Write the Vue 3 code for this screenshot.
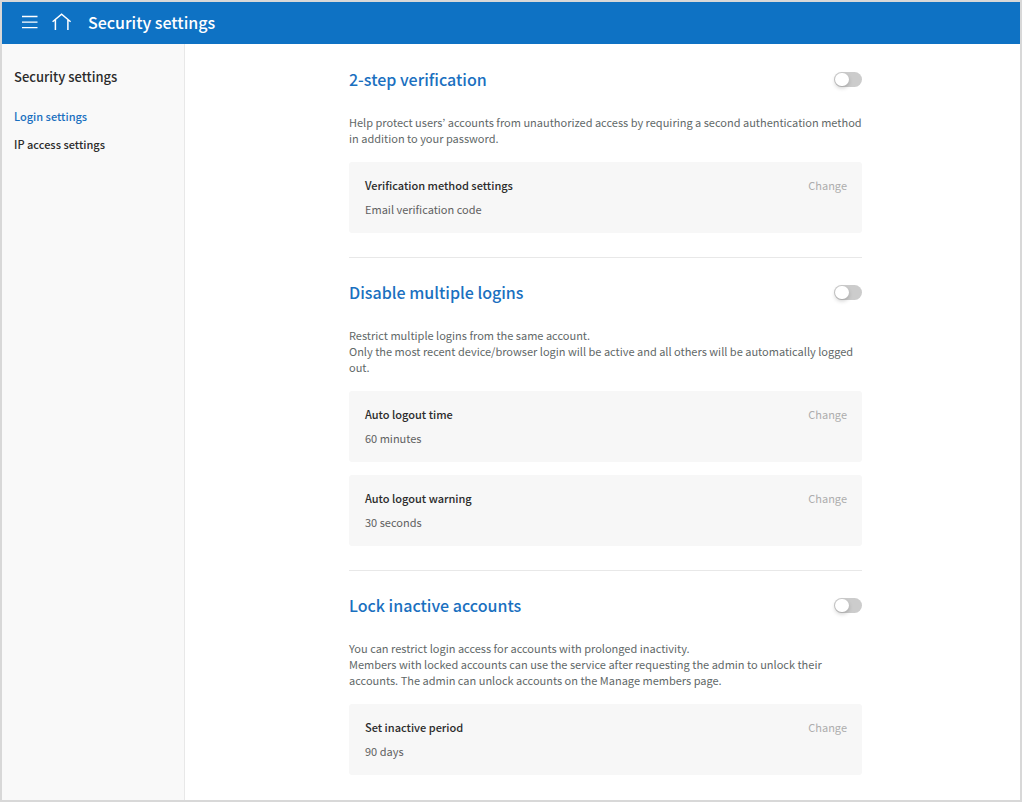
<script setup>
import { ref } from 'vue'

const sections = ref([
  {
    id: 'two-step',
    title: '2-step verification',
    enabled: false,
    lines: [
      'Help protect users’ accounts from unauthorized access by requiring a second authentication method in addition to your password.',
    ],
    cards: [{ label: 'Verification method settings', value: 'Email verification code' }],
  },
  {
    id: 'multiple-logins',
    title: 'Disable multiple logins',
    enabled: false,
    lines: [
      'Restrict multiple logins from the same account.',
      'Only the most recent device/browser login will be active and all others will be automatically logged out.',
    ],
    cards: [
      { label: 'Auto logout time', value: '60 minutes' },
      { label: 'Auto logout warning', value: '30 seconds' },
    ],
  },
  {
    id: 'inactive-accounts',
    title: 'Lock inactive accounts',
    enabled: false,
    lines: [
      'You can restrict login access for accounts with prolonged inactivity.',
      'Members with locked accounts can use the service after requesting the admin to unlock their accounts. The admin can unlock accounts on the Manage members page.',
    ],
    cards: [{ label: 'Set inactive period', value: '90 days' }],
  },
])
</script>

<template>
  <div class="app">
    <header class="topbar">
      <button class="icon-button" type="button" aria-label="Menu">
        <svg width="16" height="16" viewBox="0 0 16 16" fill="none" stroke="currentColor" stroke-width="1.3">
          <path d="M0 2.5h15.5M0 8.1h15.5M0 13.7h15.5" />
        </svg>
      </button>
      <a class="icon-button" href="#" aria-label="Home">
        <svg width="20" height="18" viewBox="0 0 20 18" fill="none" stroke="currentColor" stroke-width="1.5">
          <path d="M0.6 8.8 9.6 1.2l9 7.6M3.4 6.8v10.2M15.9 6.8v10.2" />
        </svg>
      </a>
      <h1>Security settings</h1>
    </header>
    <div class="body">
      <nav class="sidebar" aria-label="Security settings">
        <h2>Security settings</h2>
        <a class="nav-link active" href="#login" aria-current="page">Login settings</a>
        <a class="nav-link" href="#ip">IP access settings</a>
      </nav>
      <main class="main">
        <div class="content">
          <section v-for="s in sections" :key="s.id" class="section">
            <div class="section-head">
              <h2 :id="s.id">{{ s.title }}</h2>
              <input v-model="s.enabled" class="toggle" type="checkbox" role="switch" :aria-labelledby="s.id" />
            </div>
            <div class="description">
              <p v-for="line in s.lines" :key="line">{{ line }}</p>
            </div>
            <div class="cards">
              <div v-for="card in s.cards" :key="card.label" class="card">
                <div>
                  <h3>{{ card.label }}</h3>
                  <p>{{ card.value }}</p>
                </div>
                <button type="button" disabled>Change</button>
              </div>
            </div>
          </section>
        </div>
      </main>
    </div>
  </div>
</template>

<style>
body {
  margin: 0;
}
</style>

<style scoped>
.app {
  display: flex;
  flex-direction: column;
  box-sizing: border-box;
  min-height: 100vh;
  border: 2px solid #d8d8d8;
  background: #fff;
  color: #2b2b2b;
  font-family: "Noto Sans CJK KR", "Noto Sans", sans-serif;
  font-size: 11px;
  line-height: 16px;
}
h1,
h2,
h3,
p {
  margin: 0;
}
button {
  padding: 0;
  border: 0;
  background: none;
  font: inherit;
}
.topbar {
  display: flex;
  align-items: center;
  box-sizing: border-box;
  height: 42px;
  padding: 0 20px 2px;
  background: #0e72c4;
  color: #fff;
}
.icon-button {
  display: flex;
  margin-right: 14px;
  color: #fff;
}
.topbar h1 {
  margin-left: 2px;
  font-size: 16px;
  font-weight: 500;
  line-height: 22px;
}
.body {
  display: flex;
  flex: 1;
}
.sidebar {
  flex: none;
  box-sizing: border-box;
  width: 183px;
  padding: 23px 12px;
  border-right: 1px solid #e8e8e8;
  background: #f9f9f9;
}
.sidebar h2 {
  margin-bottom: 19px;
  font-size: 13px;
  font-weight: 500;
  line-height: 20px;
}
.nav-link {
  display: block;
  margin-bottom: 8px;
  color: #2b2b2b;
  font-weight: 500;
  line-height: 20px;
  text-decoration: none;
}
.nav-link.active {
  color: #1a70c0;
}
.main {
  flex: 1;
  padding: 0 16px 24px 22px;
}
.content {
  max-width: 513px;
  margin: 0 auto;
}
.section {
  padding-top: 23px;
}
.section + .section {
  margin-top: 24px;
  padding-top: 22px;
  border-top: 1px solid #e8e8e8;
}
.section-head {
  display: flex;
  align-items: center;
  justify-content: space-between;
  margin-bottom: 23px;
}
.section-head h2 {
  color: #1a70c0;
  font-size: 16px;
  font-weight: 500;
  line-height: 24px;
}
.toggle {
  box-sizing: border-box;
  width: 28px;
  height: 15px;
  margin: 0;
  padding: 1px;
  border-radius: 8px;
  background: #ccc;
  appearance: none;
}
.toggle::before {
  content: "";
  display: block;
  width: 14px;
  height: 13px;
  border-radius: 7px;
  background: #fff;
  box-shadow: 0 2px 4px rgba(0, 0, 0, 0.2);
}
.toggle:checked {
  background: #1a70c0;
}
.toggle:checked::before {
  margin-left: auto;
}
.description {
  margin-bottom: 16px;
  color: #5f6868;
}
.cards {
  display: grid;
  gap: 13px;
}
.card {
  display: flex;
  align-items: flex-start;
  justify-content: space-between;
  padding: 15px 15px 16px 16px;
  border-radius: 3px;
  background: #f7f7f7;
}
.card h3 {
  margin-bottom: 8px;
  color: #2b2b2b;
  font-size: 11px;
  font-weight: 500;
  line-height: 16px;
}
.card p {
  color: #606060;
}
.card button {
  color: #adadad;
}
</style>
